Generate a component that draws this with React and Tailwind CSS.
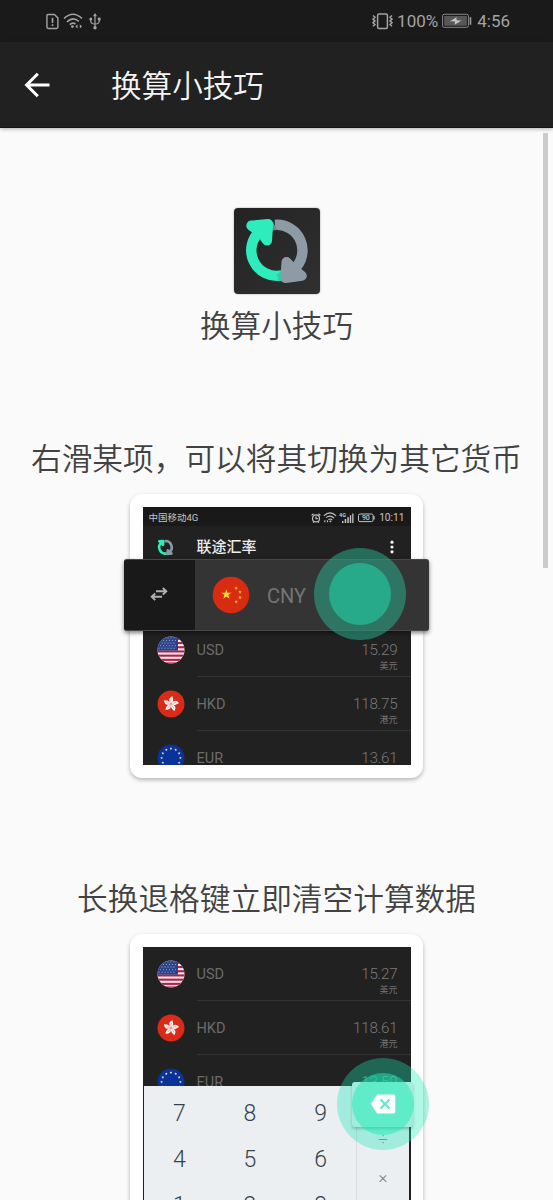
import React from 'react';

const star = (cx, cy, r) =>
  Array.from({ length: 10 }, (_, i) => {
    const a = (Math.PI * i) / 5 - Math.PI / 2;
    const q = i % 2 ? r * 0.4 : r;
    return `${cx + q * Math.cos(a)},${cy + q * Math.sin(a)}`;
  }).join(' ');

function Arrows({ className }) {
  return (
    <svg viewBox="0 0 86 86" className={className} fill="none" strokeLinejoin="round">
      <path d="M41 16.9A25.5 25.5 0 0 1 60 61.3" stroke="#8d9ba7" strokeWidth="10.4" />
      <path d="M27 22.3A25.5 25.5 0 0 0 48 67.3" stroke="#2eecbb" strokeWidth="10.4" />
      <path d="M38.8 13Q40.5 19 44.5 21.8L38.5 22.6Z" fill="#788a94" />
      <path d="M47 62.8L47 72.6L43 72.8Q46 68 42 67.6Z" fill="#23d2a5" />
      <path d="M17.3 17.6L34.2 16L33 32.6L27.5 25Z" fill="#2eecbb" stroke="#2eecbb" strokeWidth="10" />
      <path d="M52.5 54L51.4 70L67.8 67.8L59.5 61Z" fill="#8d9ba7" stroke="#8d9ba7" strokeWidth="10" />
    </svg>
  );
}

function Flag({ code, className }) {
  return (
    <svg viewBox="0 0 28 28" className={className}>
      <clipPath id={`round-${code}`}>
        <circle cx="14" cy="14" r="13.5" />
      </clipPath>
      <g clipPath={`url(#round-${code})`}>
        {code === 'USD' && (
          <>
            <rect width="28" height="28" fill="#f6eef0" />
            {[1.8, 6, 10.2, 14.4, 18.6, 22.8, 26.4].map((y) => (
              <rect key={y} y={y} width="28" height="2.1" fill="#b01f45" />
            ))}
            <rect width="21" height="14.6" fill="#2b4289" />
            {[1.8, 4.4, 7, 9.6, 12.2].map((y, r) =>
              [2, 5, 8, 11, 14, 17].map((x) => (
                <circle key={`${x}-${y}`} cx={x + (r % 2) * 1.5} cy={y} r="0.65" fill="#8e9dca" />
              ))
            )}
          </>
        )}
        {code === 'HKD' && (
          <>
            <rect width="28" height="28" fill="#d92b17" />
            {[0, 72, 144, 216, 288].map((a) => (
              <g key={a} transform={`rotate(${a + 8} 14 14)`}>
                <path d="M14 13.6C10.6 11.5 10.8 7.6 14.6 6C14 7.6 17.4 9.5 14 13.6Z" fill="#fff" />
                <path d="M14 12.5Q12.8 10.5 13.8 8.8" stroke="#d92b17" strokeWidth="0.4" fill="none" />
              </g>
            ))}
          </>
        )}
        {code === 'EUR' && (
          <>
            <rect width="28" height="28" fill="#0a3299" />
            {Array.from({ length: 12 }, (_, i) => (
              <polygon
                key={i}
                points={star(14 + 9.4 * Math.sin((i * Math.PI) / 6), 14 - 9.4 * Math.cos((i * Math.PI) / 6), 1.5)}
                fill="#f3eda5"
              />
            ))}
          </>
        )}
        {code === 'CNY' && (
          <>
            <rect width="28" height="28" fill="#d92b12" />
            <polygon points={star(10.6, 13.6, 3.9)} fill="#ffda2c" />
            {[[17.8, 9], [20.6, 11.8], [20.6, 15.8], [17.8, 19]].map(([x, y]) => (
              <polygon key={y} points={star(x, y, 1.5)} fill="#ffc42c" />
            ))}
          </>
        )}
      </g>
    </svg>
  );
}

function Row({ code, amount, name }) {
  return (
    <div className="flex h-[54px] shrink-0 pl-[14px]">
      <Flag code={code} className="mt-[13px] size-[28px] shrink-0" />
      <div className="ml-[12px] flex h-[54px] flex-1 justify-between border-b border-[#333333] pr-[13px] text-[#6b6b6b]">
        <span className="mt-[18px] text-[14.5px] leading-[20px]">{code}</span>
        <div className="flex flex-col items-end">
          <span className="mt-[17px] text-[15.2px] font-light leading-[20px] tracking-[-0.2px] text-[#7a7a7a]">{amount}</span>
          <span className="mt-[1px] text-[9px] leading-[10px] text-[#757575]">{name}</span>
        </div>
      </div>
    </div>
  );
}

function Wifi({ className }) {
  return (
    <svg viewBox="0 0 20 16" className={className} fill="none" stroke="currentColor" strokeWidth="1.6">
      <path d="M1 5.5Q10-3 19 5.5M4 8.8Q10 3.3 15.8 8.3M6.8 11.6Q9.8 9 12.4 11" />
      <circle cx="9.4" cy="13.6" r="1.4" fill="currentColor" stroke="none" />
      <path d="M12.3 13.4l2.2-2.2v4.4zM19 13.4l-2.2-2.2v4.4z" fill="currentColor" stroke="none" />
    </svg>
  );
}

function StatusBar() {
  return (
    <div className="flex h-[42px] items-center bg-[#1a1a1a] pl-[46px] pr-[43px] text-[#a3a3a3]">
      <svg viewBox="0 0 14 17" className="h-[17px] w-[13px]" fill="none" stroke="currentColor" strokeWidth="1.5">
        <path d="M2 1H9L12.8 4.6V14.5Q12.8 16 11.3 16H2.4Q1 16 1 14.5V2Q1 1 2 1Z" />
        <path d="M7 4.5V10M7 11.5V13.3" strokeWidth="1.8" />
      </svg>
      <Wifi className="ml-[4px] h-[16px] w-[20px]" />
      <svg viewBox="0 0 12 17" className="ml-[6px] h-[17px] w-[12px]" fill="none" stroke="currentColor" strokeWidth="1.2">
        <path d="M6 2V15M1.8 6V8.5Q2 10.8 6 11.2Q10 10.8 10.2 8.5V6" />
        <path d="M6 0L8 3.2H4Z" fill="currentColor" stroke="none" />
        <circle cx="6" cy="14.8" r="1.7" fill="currentColor" stroke="none" />
        <circle cx="1.8" cy="6" r="1.5" fill="currentColor" stroke="none" />
        <path d="M8.8 4.6H11.6V7.4H8.8Z" fill="currentColor" stroke="none" />
      </svg>
      <div className="ml-auto flex items-center">
        <svg viewBox="0 0 21 17" className="h-[17px] w-[21px]" fill="none" stroke="currentColor" strokeWidth="1.5">
          <rect x="5.6" y="1" width="9.8" height="14.6" rx="1.5" />
          <path d="M1 2.5l2 1.8-2 1.8 2 1.8-2 1.8 2 1.8-2 1.8M20 2.5l-2 1.8 2 1.8-2 1.8 2 1.8-2 1.8 2 1.8" />
        </svg>
        <span className="ml-[4px] text-[17px] leading-[20px]">100%</span>
        <svg viewBox="0 0 30 16" className="ml-[4px] h-[16px] w-[30px]">
          <rect x="0.6" y="1.3" width="25.8" height="13" rx="1.6" fill="none" stroke="#888" strokeWidth="1" />
          <rect x="2.2" y="2.9" width="22.6" height="9.8" rx="0.6" fill="#575757" />
          <path d="M27.6 4.2H29.3V11.8H27.6Z" fill="#999" />
          <path d="M14.5 4.3L8 8.2L13 8.6L12.7 11.7L19.5 7.6L14.6 7.2Z" fill="#c4c4c4" />
        </svg>
        <span className="ml-[5px] text-[17px] leading-[20px]">4:56</span>
      </div>
    </div>
  );
}

function Card({ className, children }) {
  return (
    <div className="mx-auto w-[293px] rounded-[12px] bg-white p-[12.5px] shadow-[0_2px_4px_rgba(0,0,0,0.28)]">
      <div className={className}>{children}</div>
    </div>
  );
}

function SwipeDemo() {
  return (
    <div className="relative mt-[14px]">
      <Card className="h-[258.5px] overflow-hidden bg-[#212121]">
        <div className="flex h-[19px] items-center bg-[#191919] pl-[6px] pr-[6px] pt-[3px] text-[#c4c4c4]">
          <span className="text-[9.5px] leading-[14px]">中国移动4G</span>
          <svg viewBox="0 0 10 10" className="ml-auto size-[10px]" fill="none" stroke="currentColor" strokeWidth="1.2">
            <circle cx="5" cy="5.4" r="3.5" />
            <path d="M5 3.4V5.7H6.8M.6 2.4L2.5.8M9.4 2.4L7.5.8M2 9.5L3 8.5M8 9.5L7 8.5" />
          </svg>
          <Wifi className="ml-[2px] h-[11px] w-[14px] -scale-x-100" />
          <svg viewBox="0 0 15 12" className="ml-[2px] h-[12px] w-[15px]" fill="currentColor">
            <text x="0" y="4.6" fontSize="5.5" fontWeight="700">4G</text>
            <path d="M3 9h1.5v2H3zM5.7 7h1.5v4H5.7zM8.3 5.3h1.5V11H8.3zM10.8 3.3h1.4V11h-1.4zM13.2 1.5h1.3V11h-1.3z" />
          </svg>
          <svg viewBox="0 0 17 10" className="ml-[4px] h-[10px] w-[17px]">
            <rect x="0.5" y="1" width="14.6" height="7.6" rx="1.5" fill="none" stroke="currentColor" />
            <path d="M16 3V6.5" stroke="currentColor" strokeWidth="1.2" />
            <text x="3.9" y="7.3" fontSize="7" fontWeight="500" fill="currentColor">90</text>
          </svg>
          <span className="ml-[4px] text-[10.2px] leading-[14px]">10:11</span>
        </div>
        <div className="flex h-[43px] items-center pl-[12px] pr-[17px]">
          <Arrows className="size-[21px]" />
          <span className="ml-[21px] text-[15px] font-medium leading-[20px] text-[#eeeeee]">联途汇率</span>
          <svg viewBox="0 0 4 14" className="ml-auto h-[14px] w-[4px]" fill="#f2f2f2">
            <circle cx="2" cy="2.2" r="1.6" />
            <circle cx="2" cy="7" r="1.6" />
            <circle cx="2" cy="11.8" r="1.6" />
          </svg>
        </div>
        <div className="mt-[54px] flex flex-col">
          <Row code="USD" amount="15.29" name="美元" />
          <Row code="HKD" amount="118.75" name="港元" />
          <Row code="EUR" amount="13.61" name="欧元" />
        </div>
      </Card>
      <div className="absolute left-[124px] top-[65px] flex h-[72px] w-[305px] items-center overflow-hidden rounded-[3px] border-y border-[#484848] bg-[#343434] shadow-[0_2px_4px_rgba(0,0,0,0.5)]">
        <div className="flex h-full w-[71px] items-center justify-center bg-[#191919]">
          <svg viewBox="0 0 18 14" className="h-[14px] w-[18px] -translate-x-px -translate-y-px" fill="none" stroke="#b0b0b0" strokeWidth="1.9">
            <path d="M6 4.3H16M12.8 1L16.3 4.3L12.8 7.6M12 9.8H2M5.2 6.5L1.7 9.8L5.2 13.1" />
          </svg>
        </div>
        <Flag code="CNY" className="ml-[17px] size-[38px]" />
        <span className="ml-[17px] mt-[2px] text-[20px] leading-[24px] text-[#747474]">CNY</span>
      </div>
      <div className="absolute left-[314px] top-[54px] flex size-[92px] items-center justify-center rounded-full bg-[#2aab8a]/55">
        <div className="size-[62px] rounded-full bg-[#27aa8a]" />
      </div>
    </div>
  );
}

function KeypadDemo() {
  return (
    <div className="relative mt-[14px]">
      <Card className="h-[300px] overflow-hidden bg-[#212121]">
        <div className="flex h-[139.5px] flex-col overflow-hidden">
          <Row code="USD" amount="15.27" name="美元" />
          <Row code="HKD" amount="118.61" name="港元" />
          <Row code="EUR" amount="13.59" name="欧元" />
        </div>
        <div className="mx-[1.5px] flex h-[170px] bg-[#eceff1]">
          <div className="grid w-[212px] auto-rows-[46px] grid-cols-3 pt-[5px] text-center text-[23px] font-light leading-[46px] text-[#37424a]">
            {['7', '8', '9', '4', '5', '6', '1', '2', '3'].map((n) => (
              <span key={n}>{n}</span>
            ))}
          </div>
          <div className="flex flex-1 flex-col items-center border-l border-[#d9dcde] pt-[34px] text-[17px] font-light leading-[38px] text-[#7c8488]">
            <span>÷</span>
            <span>×</span>
          </div>
        </div>
      </Card>
      <div className="absolute left-[352px] top-[148px] h-[45px] w-[61px] rounded-[3px] bg-[#eceff1] shadow-[0_2px_3px_rgba(0,0,0,0.3)]" />
      <div className="absolute left-[337px] top-[124px] flex size-[92px] items-center justify-center rounded-full bg-[#1de9b6]/35">
        <div className="flex size-[62px] items-center justify-center rounded-full bg-[#1de9b6]/50">
          <svg viewBox="0 0 26 20" className="h-[20px] w-[26px]">
            <path d="M8 0.5H23.5Q25.3 .5 25.3 2.3V17.7Q25.3 19.5 23.5 19.5H8Q7 19.5 6.4 18.6L.8 10L6.4 1.4Q7 .5 8 .5Z" fill="#fff" />
            <path d="M10.5 5.5L19.5 14.5M19.5 5.5L10.5 14.5" stroke="#5feacb" strokeWidth="2.2" />
          </svg>
        </div>
      </div>
    </div>
  );
}

export default function App() {
  return (
    <div className="relative h-[1200px] w-[553px] overflow-hidden bg-[#fafafa] font-['Roboto','Noto_Sans_CJK_SC',sans-serif]">
      <StatusBar />
      <header className="flex h-[86px] items-center border-b border-[#111111] bg-[#212121] pl-[24px] shadow-[0_1px_4px_rgba(0,0,0,0.3)]">
        <svg viewBox="0 0 26 26" className="size-[26px]" fill="none" stroke="#fff" strokeWidth="3">
          <path d="M25.5 13H3M13.8 1.8L2.6 13L13.8 24.2" />
        </svg>
        <h1 className="ml-[61px] mt-[5px] text-[30.6px] font-[350] leading-[40px] text-[#f4f4f4]">换算小技巧</h1>
      </header>
      <main className="flex flex-col pt-[80px] text-[#424242]">
        <div className="mx-auto size-[86px] rounded-[4px] bg-linear-to-br from-[#232323] to-[#303030] shadow-[0_0_2px_rgba(0,0,0,0.4)]">
          <Arrows className="size-[86px]" />
        </div>
        <p className="mt-[13px] text-center text-[30.6px] font-[350] leading-[40px]">换算小技巧</p>
        <h2 className="mt-[93px] whitespace-nowrap text-center text-[30.7px] font-[350] leading-[40px]">
          右滑某项，可以将其切换为其它货币
        </h2>
        <SwipeDemo />
        <h2 className="mt-[102.5px] whitespace-nowrap text-center text-[30.7px] font-[350] leading-[40px]">
          长换退格键立即清空计算数据
        </h2>
        <KeypadDemo />
      </main>
      <div className="absolute left-[543px] top-[133px] h-[435px] w-[5px] bg-[#cbcbcb]" />
    </div>
  );
}
